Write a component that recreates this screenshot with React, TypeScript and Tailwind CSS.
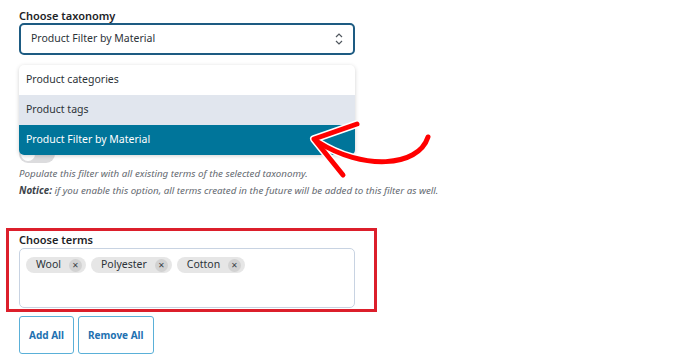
import React from "react";

const FONT = { fontFamily: '"Noto Sans", "Open Sans", sans-serif' };

const TERMS = ["Wool", "Polyester", "Cotton"];

function Chevrons() {
  return (
    <svg width="10" height="14" viewBox="0 0 10 14" fill="none" stroke="#50575e" strokeWidth="1.2">
      <path d="M2 5 L5 2 L8 5" />
      <path d="M2 9 L5 12 L8 9" />
    </svg>
  );
}

function Chip({ label }: { label: string }) {
  return (
    <span className="flex items-center gap-[8px] h-[16px] rounded-full bg-[#e6e6e6] pl-[10px] pr-[4px] text-[10.5px] text-[#2c3338]">
      {label}
      <span className="flex items-center justify-center w-[13px] h-[13px] rounded-full bg-[#d2d2d2] text-[8px] leading-none text-[#3c434a]">
        ✕
      </span>
    </span>
  );
}

export default function App() {
  return (
    <div className="relative w-[680px] h-[358px] bg-white overflow-hidden" style={FONT}>
      <div className="px-[19px] pt-[8px]">
        {/* Taxonomy */}
        <div className="text-[11px] leading-[15px] font-semibold text-[#1d2327]">Choose taxonomy</div>
        <div className="relative w-[336px]">
          <div className="flex items-center justify-between h-[32px] border-2 border-[#1d5b82] rounded-[5px] pl-[10px] pr-[9px] text-[10.5px] text-[#2c3338]">
            Product Filter by Material
            <Chevrons />
          </div>
          {/* open list */}
          <div className="absolute left-0 top-[42px] z-10 w-[336px] rounded-[5px] overflow-hidden bg-white shadow-[0_1px_4px_rgba(0,0,0,0.18)] text-[10.5px]">
            <div className="h-[30px] flex items-center px-[7px] text-[#2c3338]">Product categories</div>
            <div className="h-[30px] flex items-center px-[7px] bg-[#e1e6ee] text-[#2c3338]">Product tags</div>
            <div className="h-[30px] flex items-center px-[7px] bg-[#00759a] text-white">Product Filter by Material</div>
          </div>
        </div>

        <div className="mt-[90px] w-[36px] h-[18px] rounded-full bg-[#dcdcde] flex items-center px-[2px]">
          <span className="w-[14px] h-[14px] rounded-full bg-white" />
        </div>
        <p className="mt-[2px] text-[9.75px] leading-[17px] italic text-[#646970]">
          Populate this filter with all existing terms of the selected taxonomy.
        </p>
        <p className="text-[9.75px] leading-[17px] italic text-[#646970]">
          <b className="text-[#3c434a]">Notice:</b> if you enable this option, all terms created in the future will be added to this filter as well.
        </p>
      </div>

      {/* terms (annotated) */}
      <div className="ml-[6px] mt-[29px] w-[371px] border-[3px] border-[#dc1f2b] pl-[10px] pb-[1px]">
        <div className="pt-[2px] text-[11px] leading-[14px] font-semibold text-[#1d2327]">Choose terms</div>
        <div className="mt-[1px] w-[336px] h-[60px] border border-[#c8d3e2] rounded-[5px] flex items-start gap-[5px] px-[6px] pt-[8px]">
          {TERMS.map((t) => (
            <Chip key={t} label={t} />
          ))}
        </div>
      </div>

      <div className="flex gap-[4px] ml-[19px] mt-[4px]">
        <button className="h-[38px] px-[9px] border border-[#5ab0d8] rounded-[3px] text-[10px] font-bold text-[#2271b1]">Add All</button>
        <button className="h-[38px] px-[9px] border border-[#5ab0d8] rounded-[3px] text-[10px] font-bold text-[#2271b1]">Remove All</button>
      </div>

      {/* arrow annotation */}
      <svg className="absolute left-0 top-0 z-20 pointer-events-none" width="680" height="358" fill="none" strokeLinecap="round" strokeLinejoin="round">
        <g stroke="white" strokeWidth="8">
          <path d="M428 137 C418 168 362 170 318 142" />
          <path d="M357 124 L314 139 L343 175" />
        </g>
        <g stroke="#ff0000" strokeWidth="5">
          <path d="M428 137 C418 168 362 170 318 142" />
          <path d="M357 124 L314 139 L343 175" />
        </g>
      </svg>
    </div>
  );
}
